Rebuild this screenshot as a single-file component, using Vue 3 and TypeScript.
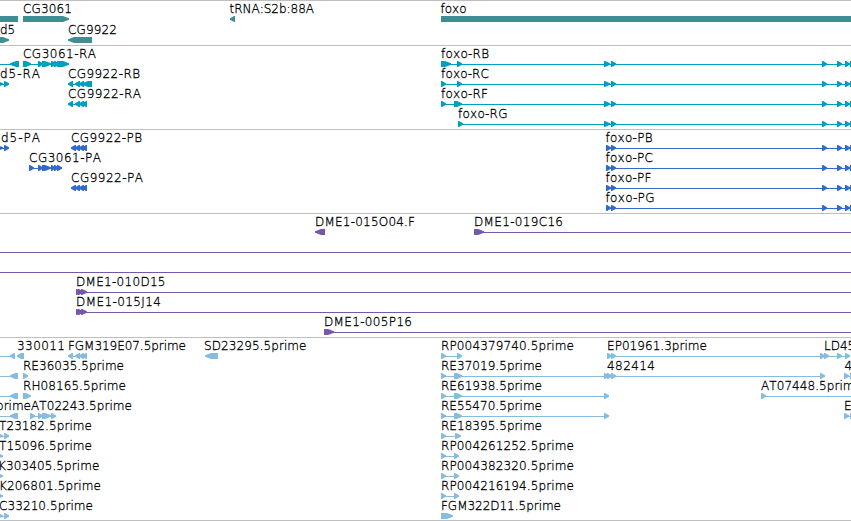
<template>
  <div class="browser">
    <section v-for="track in tracks" :key="track.name" class="track" :class="track.name">
      <svg v-for="(row, r) in track.rows" :key="r" class="row" width="851" height="20">
        <g v-for="(f, i) in row" :key="i">
          <rect v-if="f.line" :x="f.line[0]" y="18" :width="f.line[1] - f.line[0]" height="1" />
          <path v-for="(exon, e) in f.exons" :key="e" :d="shape(exon, f.dir)" />
          <text v-if="f.label" :x="f.x" y="12" :textLength="f.w" lengthAdjust="spacing">{{ f.label }}</text>
        </g>
      </svg>
    </section>
  </div>
</template>

<script setup lang="ts">
type Span = [number, number];
// 1 = forward strand, -1 = reverse strand, 0 = plain block
type Dir = 1 | -1 | 0;

interface Feature {
  label: string;
  x: number;
  // label width
  w?: number;
  dir: Dir;
  exons: Span[];
  line?: Span;
}

interface Track {
  name: string;
  rows: Feature[][];
}

const feat = (label: string, x: number, w: number, dir: Dir, exons: Span[], line?: Span): Feature => ({
  label,
  x,
  w: w || undefined,
  dir,
  exons,
  line
});

// exon box ending in an arrow head
const shape = ([a, b]: Span, dir: Dir) => {
  if (dir === 0) return `M${a} 15H${b}V21H${a}Z`;
  const w = b - a;
  const head = w > 6 ? Math.min(w - 3, 6) : w - 1;
  if (dir === 1) return `M${a} 15H${b - head}L${b} 17.2V18.8L${b - head} 21H${a}Z`;
  return `M${b} 15H${a + head}L${a} 17.2V18.8L${a + head} 21H${b}Z`;
};

const foxoTail: Span[] = [[611, 616], [822, 827], [837, 842], [845, 850], [850, 856]];
const foxoR = (label: string, x: number, w: number, exons: Span[]) =>
  feat(label, x, w, 1, [...exons, [604, 610], ...foxoTail], [x, 851]);
const foxoP = (label: string, w: number) => feat(label, 605.5, w, 1, [[606, 611], ...foxoTail], [606, 851]);

const cg9922: Span[] = [[68, 73], [75, 80], [79, 84], [82, 87]];
const cg9922P: Span[] = [[71, 76], [75, 80], [79, 84], [82, 87]];
const d5: Span[] = [[-3, 3], [4, 9]];
const first: Span = [441, 446];

const tracks: Track[] = [
  {
    name: 'gene',
    rows: [
      [
        feat('', 0, 0, 0, [[0, 18]]),
        feat('CG3061', 23, 49, 1, [[23, 69]]),
        feat('tRNA:S2b:88A', 229.5, 84.5, -1, [[230, 235]]),
        feat('foxo', 440.5, 0, 0, [[441, 851]])
      ],
      [feat('d5', 0, 0, 1, [[-14, 9]]), feat('CG9922', 68, 49, -1, [[68, 92]])]
    ]
  },
  {
    name: 'transcript',
    rows: [
      [
        feat('', 0, 0, -1, [[10, 19]], [0, 12]),
        feat('CG3061-RA', 23, 73, 1, [[23, 31], [38, 43], [42, 51], [51, 57], [54, 60], [57, 69]], [23, 69]),
        foxoR('foxo-RB', 441, 48, [[441, 451], [457, 462]])
      ],
      [
        feat('d5-RA', 0, 40, 1, d5, [0, 9]),
        feat('CG9922-RB', 68, 72, -1, [[68, 73], [75, 80], [79, 84], [82, 92]], [68, 92]),
        foxoR('foxo-RC', 441, 48, [first, [457, 462]])
      ],
      [feat('CG9922-RA', 68, 73, -1, cg9922, [68, 87]), foxoR('foxo-RF', 441, 47, [first, [454, 462]])],
      [foxoR('foxo-RG', 458, 49.5, [[458, 463]])]
    ]
  },
  {
    name: 'protein',
    rows: [
      [
        feat('d5-PA', 1, 39, 1, d5, [0, 9]),
        feat('CG9922-PB', 71, 71, -1, cg9922P, [71, 87]),
        foxoP('foxo-PB', 47)
      ],
      [
        feat('CG3061-PA', 29, 72, 1, [[29, 34], [38, 43], [42, 51], [51, 55], [54, 58], [57, 62]], [29, 62]),
        foxoP('foxo-PC', 47.5)
      ],
      [feat('CG9922-PA', 71, 72, -1, cg9922P, [71, 87]), foxoP('foxo-PF', 46)],
      [foxoP('foxo-PG', 49)]
    ]
  },
  {
    name: 'bac',
    rows: [
      [
        feat('DME1-015O04.F', 315, 100, -1, [[315, 325]]),
        feat('DME1-019C16', 474, 89, 1, [[474, 484]], [474, 851])
      ],
      [feat('', 0, 0, 1, [], [0, 851])],
      [feat('', 0, 0, 1, [], [0, 851])],
      [feat('DME1-010D15', 76, 89.5, 1, [[76, 81], [78, 83], [81, 87]], [76, 851])],
      [feat('DME1-015J14', 76, 85, 1, [[76, 81], [78, 83], [81, 87]], [76, 851])],
      [feat('DME1-005P16', 324, 88, 1, [[324, 334]], [324, 851])]
    ]
  },
  {
    name: 'est',
    rows: [
      [
        feat('', 0, 0, -1, [[10, 15]], [0, 12]),
        feat('330011', 17, 48, -1, [[17, 24]]),
        feat('FGM319E07.5prime', 68, 118, -1, cg9922, [68, 87]),
        feat('SD23295.5prime', 204, 102.5, -1, [[205, 218]]),
        feat('RP004379740.5prime', 441, 133, 1, [first, [457, 462]], [441, 462]),
        feat('EP01961.3prime', 607, 100, 1, [[607, 612], [611, 616], [820, 825]], [607, 825]),
        feat('LD45', 824, 0, 1, [[824, 829], [837, 842], [845, 850]], [824, 850])
      ],
      [
        feat('', 0, 0, -1, [[10, 18]], [0, 12]),
        feat('RE36035.5prime', 23, 101, 1, [[23, 28]]),
        feat('RE37019.5prime', 441, 101, 1, [first, [454, 462], [604, 609]], [441, 609]),
        feat('482414', 607, 48, 1, [[607, 612], [611, 616], [820, 825]], [607, 825]),
        feat('4', 844.5, 0, 1, [[844, 849], [850, 856]], [844, 851])
      ],
      [
        feat('', 0, 0, -1, [[10, 18]], [0, 12]),
        feat('RH08165.5prime', 23, 103, 1, [[23, 31]]),
        feat('RE61938.5prime', 441, 101, 1, [first, [454, 462], [604, 609]], [441, 609]),
        feat('AT07448.5prime', 761, 101, 1, [[761, 766]], [761, 851])
      ],
      [
        feat('prime', -4, 35, -1, [[10, 18]], [0, 12]),
        feat('AT02243.5prime', 31, 101, 1, [[30, 35], [38, 43], [42, 51], [51, 56]], [30, 56]),
        feat('RE55470.5prime', 441, 101, 1, [first, [454, 462], [604, 609]], [441, 609]),
        feat('E', 844, 0, 1, [[844, 849], [850, 856]], [844, 851])
      ],
      [
        feat('T23182.5prime', -1, 93, 1, d5, [0, 9]),
        feat('RE18395.5prime', 441, 101, 1, [first, [455, 461]], [441, 461])
      ],
      [
        feat('T15096.5prime', -1, 93, 1, [[-3, 3]]),
        feat('RP004261252.5prime', 441, 133, 1, [first, [454, 459]], [441, 459])
      ],
      [
        feat('K303405.5prime', -2, 101.5, 1, [[-3, 3]]),
        feat('RP004382320.5prime', 441, 133, 1, [first, [454, 459]], [441, 459])
      ],
      [
        feat('K206801.5prime', -1, 102, 1, [[-3, 3]]),
        feat('RP004216194.5prime', 441, 133, 1, [first, [454, 459]], [441, 459])
      ],
      [
        feat('C33210.5prime', -1, 94, 1, d5, [0, 9]),
        feat('FGM322D11.5prime', 441, 120, 1, [[441, 453]])
      ]
    ]
  }
];
</script>

<style scoped>
.browser {
  display: flex;
  flex-direction: column;
  width: 851px;
  height: 521px;
  overflow: hidden;
  background: #fff;
  border-bottom: 1px solid #bfbfbf;
  box-sizing: border-box;
}

.track {
  display: flex;
  flex-direction: column;
  padding-bottom: 3px;
  border-top: 1px solid #bfbfbf;
}

.row {
  display: block;
  flex: none;
  overflow: visible;
}

.row text {
  font-family: "DejaVu Sans", sans-serif;
  font-size: 12px;
  font-weight: 200;
  font-kerning: none;
  fill: #000;
  stroke: #000;
  stroke-width: 0.3px;
}

.gene {
  gap: 1px;
  fill: #408e94;
}

.transcript {
  fill: #009fc0;
}

.protein {
  fill: #3469cc;
}

.bac {
  fill: #7658a8;
}

.est {
  padding-bottom: 2px;
  fill: #87bcdf;
}
</style>
